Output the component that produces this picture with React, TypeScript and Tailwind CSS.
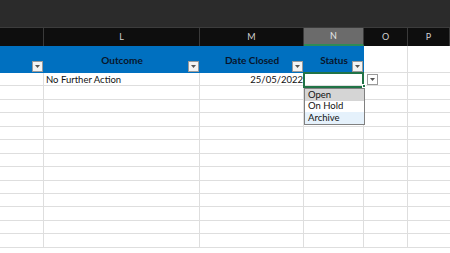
const COL_W = ["w-[44px]", "w-[156px]", "w-[104px]", "w-[60px]", "w-[44px]"];
const LETTERS = ["", "L", "M", "N", "O", "P"];
const EMPTY_ROWS = 12;

function FilterButton({ className = "" }: { className?: string }) {
  return (
    <div
      className={`w-[11px] h-[11px] bg-[#f3f3f3] border border-[#9a9a9a] flex items-center justify-center ${className}`}
    >
      <svg width="5" height="3" viewBox="0 0 5 3">
        <path d="M0 0h5L2.5 3z" fill="#555" />
      </svg>
    </div>
  );
}

function GridRow({ children }: { children?: React.ReactNode }) {
  return (
    <div className="flex h-[13.45px] border-b border-[#dedede]">
      {children ?? (
        <>
          {COL_W.map((w, i) => (
            <div key={i} className={`${w} shrink-0 border-r border-[#dedede]`} />
          ))}
          <div className="flex-1" />
        </>
      )}
    </div>
  );
}

export default function App() {
  return (
    <div
      className="w-[450px] h-[253px] overflow-hidden bg-white text-[9.5px]"
      style={{ fontFamily: "Lato, 'Liberation Sans', sans-serif" }}
    >
      {/* ribbon edge */}
      <div className="h-[28px] bg-[#2b2b2b] border-b border-[#3c3c3c]" />

      {/* column letters */}
      <div className="flex h-[18px] bg-[#0e0e0e] text-[#d0d0d0] text-[9px]">
        {LETTERS.map((l, i) => (
          <div
            key={i}
            className={`${i < 5 ? COL_W[i] + " shrink-0" : "flex-1"} flex items-center justify-center border-r border-[#3a3a3a] ${
              l === "N" ? "bg-[#6b6b6b] text-[#e8e8e8] border-b-2 border-b-[#2e8b57]" : ""
            }`}
          >
            {l}
          </div>
        ))}
      </div>

      {/* table header */}
      <div className="flex h-[27px]">
        {["", "Outcome", "Date Closed", "Status"].map((t, i) => (
          <div
            key={i}
            className={`${COL_W[i]} shrink-0 bg-[#0070c0] relative flex items-center justify-center pt-[2px] text-[10px] font-bold text-[#08152b]`}
          >
            {t}
            <FilterButton className="absolute right-[1px] bottom-[1px]" />
          </div>
        ))}
        <div className={`${COL_W[4]} shrink-0 border-r border-b border-[#dedede]`} />
        <div className="flex-1 border-b border-[#dedede]" />
      </div>

      {/* data */}
      <div className="relative">
        <GridRow>
          <div className={`${COL_W[0]} shrink-0 border-r border-[#dedede]`} />
          <div className={`${COL_W[1]} shrink-0 border-r border-[#dedede] pl-[2px] pt-[1px] flex items-center text-[#111]`}>
            No Further Action
          </div>
          <div className={`${COL_W[2]} shrink-0 flex items-center justify-end pr-[1px] pt-[1px] text-[#111]`}>
            25/05/2022
          </div>
          <div className={`${COL_W[3]} shrink-0 relative`}>
            <div className="absolute -left-[1px] -top-[1px] w-[61px] h-[16px] border-2 border-[#217346]" />
            <div className="absolute right-[-2px] bottom-[-3px] w-[4px] h-[4px] bg-[#217346] border border-white" />
          </div>
          <div className={`${COL_W[4]} shrink-0 border-r border-[#dedede] relative`}>
            <FilterButton className="absolute left-[3px] top-[1px] bg-white" />
          </div>
          <div className="flex-1" />
        </GridRow>
        {Array.from({ length: EMPTY_ROWS }).map((_, i) => (
          <GridRow key={i} />
        ))}

        {/* validation list */}
        <div className="absolute left-[304px] top-[15px] w-[61px] border border-[#808080] bg-white text-[9.5px] text-[#111]">
          <div className="h-[11.5px] bg-[#d5d5d5] pl-[3px] flex items-center">Open</div>
          <div className="h-[11.5px] pl-[3px] flex items-center">On Hold</div>
          <div className="h-[11.5px] bg-[#e5f1fb] pl-[3px] flex items-center">Archive</div>
        </div>
      </div>
    </div>
  );
}
